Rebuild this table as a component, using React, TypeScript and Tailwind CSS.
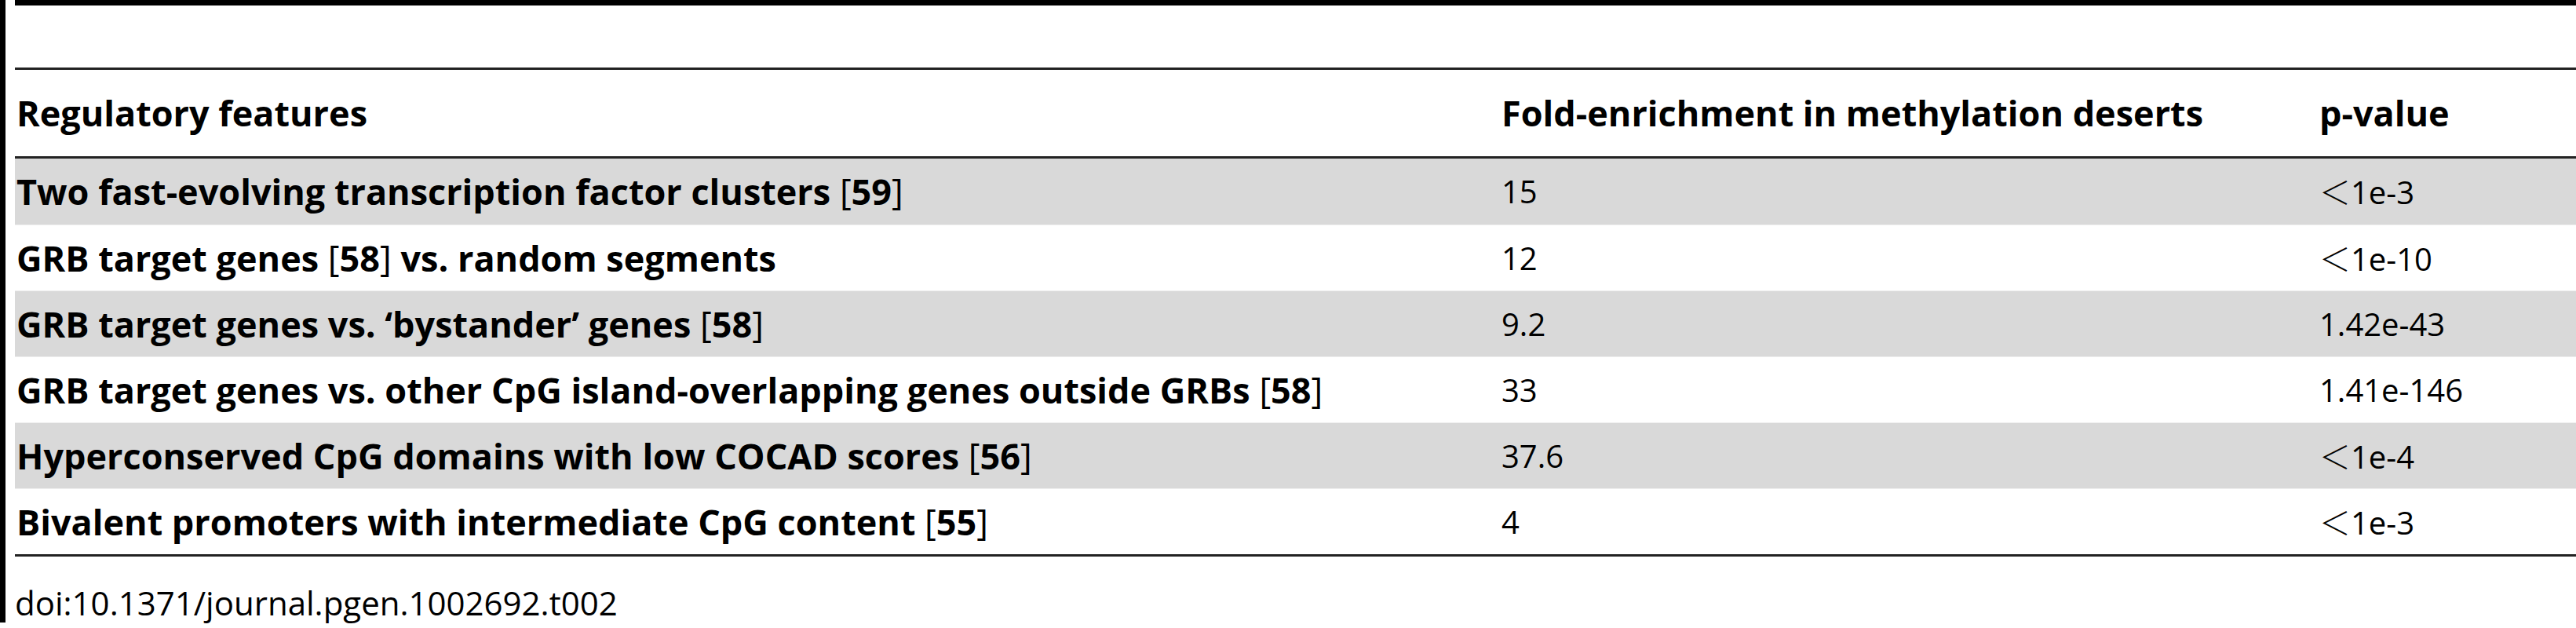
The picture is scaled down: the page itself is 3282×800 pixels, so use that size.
import React from "react";

type Row = { label: React.ReactNode; fold: string; p: React.ReactNode; gray: boolean };

const Ref = ({ n }: { n: string }) => (
  <>
    <span className="font-normal">[</span>
    {n}
    <span className="font-normal">]</span>
  </>
);

const Lt = () => (
  <span
    className="font-light"
    style={{ fontFamily: '"Noto Sans CJK JP", "Noto Sans", sans-serif' }}
  >
    ＜
  </span>
);

const rows: Row[] = [
  { label: <>Two fast-evolving transcription factor clusters <Ref n="59" /></>, fold: "15", p: <><Lt />1e-3</>, gray: true },
  { label: <>GRB target genes <Ref n="58" /> vs. random segments</>, fold: "12", p: <><Lt />1e-10</>, gray: false },
  { label: <>GRB target genes vs. ‘bystander’ genes <Ref n="58" /></>, fold: "9.2", p: "1.42e-43", gray: true },
  { label: <>GRB target genes vs. other CpG island-overlapping genes outside GRBs <Ref n="58" /></>, fold: "33", p: "1.41e-146", gray: false },
  { label: <>Hyperconserved CpG domains with low COCAD scores <Ref n="56" /></>, fold: "37.6", p: <><Lt />1e-4</>, gray: true },
  { label: <>Bivalent promoters with intermediate CpG content <Ref n="55" /></>, fold: "4", p: <><Lt />1e-3</>, gray: false },
];

export default function App() {
  return (
    <div
      className="flex w-[3282px] h-[800px] bg-white text-black"
      style={{ fontFamily: '"Open Sans", "Noto Sans", sans-serif' }}
    >
      <div className="w-[7px] h-[793px] bg-black shrink-0" />
      <div className="w-[12px] shrink-0" />
      <div className="flex-1 flex flex-col">
        <div className="h-[7px] bg-black" />
        <div className="h-[79px]" />
        <div className="h-[3px] bg-[#222]" />
        <div className="grid grid-cols-[1892px_1042px_1fr] h-[110px] items-center text-[45px] leading-[60px] font-bold">
          <div className="pl-[2px] whitespace-nowrap">Regulatory features</div>
          <div className="pl-[2px] whitespace-nowrap">Fold-enrichment in methylation deserts</div>
          <div className="pl-[2px]">p-value</div>
        </div>
        <div className="h-[3px] bg-[#222]" />
        {rows.map((r, i) => (
          <div
            key={i}
            className={`grid grid-cols-[1892px_1042px_1fr] h-[84px] items-center leading-[60px] ${
              r.gray ? "bg-[#d9d9d9]" : "bg-white"
            } ${i > 0 ? "border-t border-[#eeeeee]" : ""}`}
          >
            <div className="pl-[2px] font-bold text-[45px] whitespace-nowrap">{r.label}</div>
            <div className="pl-[2px] text-[40px]">{r.fold}</div>
            <div className="pl-[2px] text-[40px] whitespace-nowrap">{r.p}</div>
          </div>
        ))}
        <div className="h-[3px] bg-[#222]" />
        <div className="mt-[31px] text-[42px] leading-[56px] whitespace-nowrap">doi:10.1371/journal.pgen.1002692.t002</div>
      </div>
    </div>
  );
}
